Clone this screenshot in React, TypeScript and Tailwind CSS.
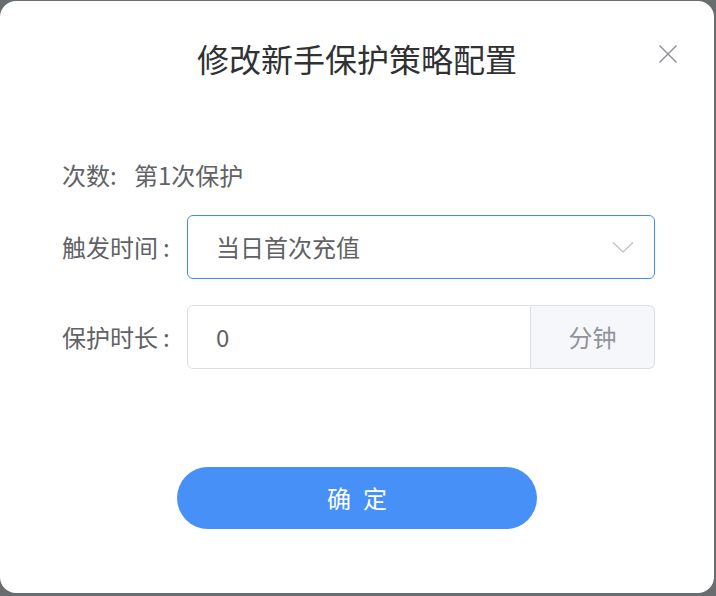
const font = { fontFamily: '"Noto Sans CJK SC", "Noto Sans", sans-serif' };

function Colon({ pad }: { pad: string }) {
  return <span className={`inline-block w-[24px] ${pad}`}>:</span>;
}

export default function App() {
  return (
    <div className="w-[716px] h-[596px] bg-[#6a6d70] overflow-hidden" style={font}>
      <div className="relative mt-[1px] w-[714px] h-[592px] rounded-[16px] bg-white flex flex-col">
        {/* header */}
        <h2 className="pt-[37px] text-center text-[32px] leading-[40px] text-[#303133] font-normal">
          修改新手保护策略配置
        </h2>
        <button className="absolute left-[656px] top-[41px] w-[24px] h-[24px] flex items-center justify-center">
          <svg width="20" height="20" viewBox="0 0 20 20" fill="none">
            <path d="M1.5 1.5 L18.5 18.5 M18.5 1.5 L1.5 18.5" stroke="#909399" strokeWidth="1.5" />
          </svg>
        </button>

        {/* form */}
        <div className="flex flex-col pl-[62px] mt-[80px] text-[24px] text-[#606266]">
          <div className="leading-[34px]">
            次数<Colon pad="pl-0" />第1次保护
          </div>

          <div className="flex items-center mt-[23px]">
            <span className="w-[125px] leading-[34px]">
              触发时间<Colon pad="pl-[5px]" />
            </span>
            <div className="w-[468px] h-[64px] rounded-[6px] border border-[#3f8cf3] flex items-center justify-between pl-[28px] pr-[20px]">
              <span>当日首次充值</span>
              <svg width="22" height="13" viewBox="0 0 22 13" fill="none">
                <path d="M1 1.5 L11 11 L21 1.5" stroke="#c0c4cc" strokeWidth="1.4" />
              </svg>
            </div>
          </div>

          <div className="flex items-center mt-[26px]">
            <span className="w-[125px] leading-[34px]">
              保护时长<Colon pad="pl-[5px]" />
            </span>
            <div className="w-[468px] h-[64px] flex">
              <div className="flex-1 rounded-l-[6px] border border-[#dcdfe6] flex items-center pl-[28px]">0</div>
              <div className="w-[124px] rounded-r-[6px] border border-l-0 border-[#dcdfe6] bg-[#f5f7fa] flex items-center justify-center text-[#909399]">
                分钟
              </div>
            </div>
          </div>
        </div>

        {/* footer */}
        <div className="flex justify-center mt-[98px]">
          <button className="w-[360px] h-[62px] rounded-full bg-[#4690f8] text-white text-[24px] tracking-[12px] pl-[12px]">
            确定
          </button>
        </div>
      </div>
    </div>
  );
}
